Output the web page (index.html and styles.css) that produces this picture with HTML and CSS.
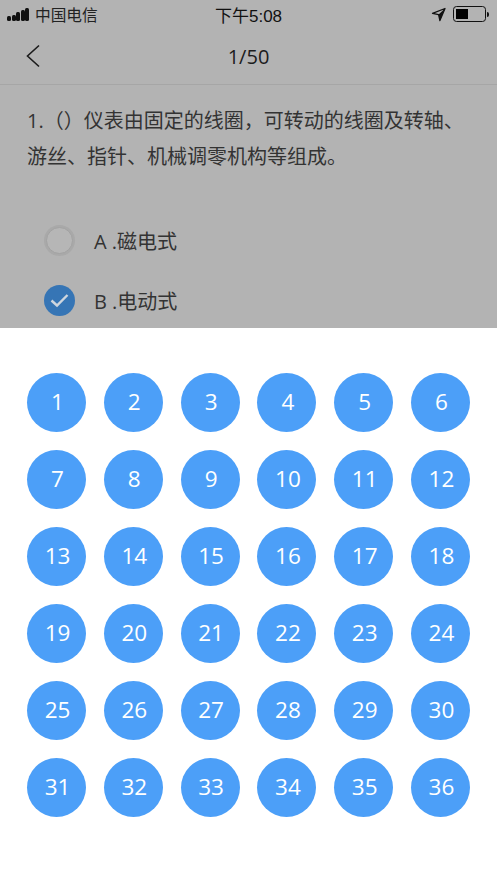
FILE: index.html
```html
<!DOCTYPE html>
<html lang="en">
<head>
    <meta charset="UTF-8">
    <meta name="viewport" content="width=device-width, initial-scale=1.0">
    <title>1/50</title>
    <link rel="stylesheet" href="styles.css">
</head>
<body>
    <div class="top">
        <div class="status-bar">
            <div class="status-left">
                <div class="signal"><i></i><i></i><i></i><i></i><i></i></div>
                <span>中国电信</span>
            </div>
            <div class="status-time">下午5:08</div>
            <div class="status-right">
                <svg class="arrow-icon" width="15" height="15" viewBox="0 0 15 15">
                    <path d="M14 1.5 L1.5 6.3 L7.6 7.6 L8.9 13.6 Z" fill="none" stroke="#111" stroke-width="1.3" stroke-linejoin="round"/>
                    <path d="M14 1.5 L7.6 7.6 L8.9 13.6 Z" fill="#111"/>
                </svg>
                <div class="battery"><div class="battery-fill"></div></div>
                <div class="battery-tip"></div>
            </div>
        </div>
        <div class="nav-bar">
            <svg class="back-icon" width="14" height="24" viewBox="0 0 14 24">
                <path d="M13 1.5 L1.5 12 L13 22.5" fill="none" stroke="#1c1c1c" stroke-width="1.6"/>
            </svg>
            <div class="nav-title">1/50</div>
        </div>
        <div class="question">1.（）仪表由固定的线圈，可转动的线圈及转轴、游丝、指针、机械调零机构等组成。</div>
        <div class="option">
            <div class="radio"></div>
            <div class="option-text">A .磁电式</div>
        </div>
        <div class="option">
            <div class="radio checked">
                <svg width="20" height="16" viewBox="0 0 20 16">
                    <path d="M1.5 8.5 L7 13.5 L17.5 3" fill="none" stroke="#cfd6de" stroke-width="2.4"/>
                </svg>
            </div>
            <div class="option-text">B .电动式</div>
        </div>
    </div>
    <div class="panel">
        <div class="num-grid">
            <div class="num">1</div><div class="num">2</div><div class="num">3</div><div class="num">4</div><div class="num">5</div><div class="num">6</div>
            <div class="num">7</div><div class="num">8</div><div class="num">9</div><div class="num">10</div><div class="num">11</div><div class="num">12</div>
            <div class="num">13</div><div class="num">14</div><div class="num">15</div><div class="num">16</div><div class="num">17</div><div class="num">18</div>
            <div class="num">19</div><div class="num">20</div><div class="num">21</div><div class="num">22</div><div class="num">23</div><div class="num">24</div>
            <div class="num">25</div><div class="num">26</div><div class="num">27</div><div class="num">28</div><div class="num">29</div><div class="num">30</div>
            <div class="num">31</div><div class="num">32</div><div class="num">33</div><div class="num">34</div><div class="num">35</div><div class="num">36</div>
        </div>
    </div>
</body>
</html>
```

FILE: styles.css
```css
html, body {
    margin: 0;
    height: 883px;
    overflow: hidden;
    background-color: white;
    font-family: "Open Sans", "Noto Sans CJK SC", sans-serif;
}

.top {
    height: 328px;
    background-color: #b3b3b3;
    overflow: hidden;
}

.status-bar {
    height: 28px;
    display: grid;
    grid-template-columns: 1fr auto 1fr;
    align-items: center;
    color: #111;
    font-family: "Liberation Sans", "Noto Sans CJK SC", sans-serif;
}

.status-left {
    display: flex;
    align-items: center;
    padding-left: 7px;
    gap: 6px;
    color: #222;
    font-size: 15.7px;
}

.signal {
    display: flex;
    align-items: flex-end;
    gap: 0.5px;
}

.signal i {
    display: block;
    width: 4px;
    background-color: #111;
    border-radius: 1.5px;
}

.signal i:nth-child(1) { height: 5px; }
.signal i:nth-child(2) { height: 6px; }
.signal i:nth-child(3) { height: 9px; }
.signal i:nth-child(4) { height: 11px; }
.signal i:nth-child(5) { height: 13px; }

.status-time {
    font-size: 17px;
    color: #111;
}

.status-right {
    display: flex;
    align-items: center;
    justify-content: flex-end;
    padding-right: 8px;
}

.arrow-icon {
    margin-right: 7px;
}

.battery {
    width: 27px;
    height: 10px;
    border: 1.2px solid #111;
    border-radius: 3.5px;
    padding: 2px;
}

.battery-fill {
    width: 12px;
    height: 100%;
    background-color: #000;
}

.battery-tip {
    width: 2px;
    height: 5px;
    background-color: #111;
    border-radius: 0 2px 2px 0;
    margin-left: 1px;
}

.nav-bar {
    height: 57px;
    display: flex;
    align-items: center;
    justify-content: center;
    position: relative;
    border-bottom: 1px solid #a6a6a6;
    box-sizing: border-box;
}

.back-icon {
    position: absolute;
    left: 26px;
    top: 16px;
}

.nav-title {
    font-size: 20px;
    color: #1c1c1c;
}

.question {
    padding: 18px 27px 0;
    font-size: 20px;
    line-height: 36px;
    color: #333;
    height: 107px;
}

.option {
    height: 60px;
    display: flex;
    align-items: center;
    padding-left: 44px;
    gap: 19px;
}

.radio {
    width: 25px;
    height: 25px;
    margin: 0 2px;
    border: 1px solid #a2a2a2;
    border-radius: 50%;
    background-color: #b6b6b6;
    box-shadow: 0 0 0 2px #a9a9a9;
    display: flex;
    align-items: center;
    justify-content: center;
}

.radio.checked {
    width: 31px;
    height: 31px;
    margin: 0;
    border: none;
    box-shadow: none;
    background-color: #3675b5;
}

.option-text {
    font-size: 20px;
    color: #333;
}

.panel {
    padding: 45px 27px 0;
}

.num-grid {
    display: grid;
    grid-template-columns: repeat(6, 59px);
    grid-auto-rows: 59px;
    justify-content: space-between;
    row-gap: 18px;
    width: 443px;
}

.num {
    background-color: #4c9ff8;
    color: white;
    border-radius: 50%;
    display: flex;
    align-items: center;
    justify-content: center;
    font-size: 22.5px;
    box-sizing: border-box;
    padding: 0 0 2px 2px;
}
```
